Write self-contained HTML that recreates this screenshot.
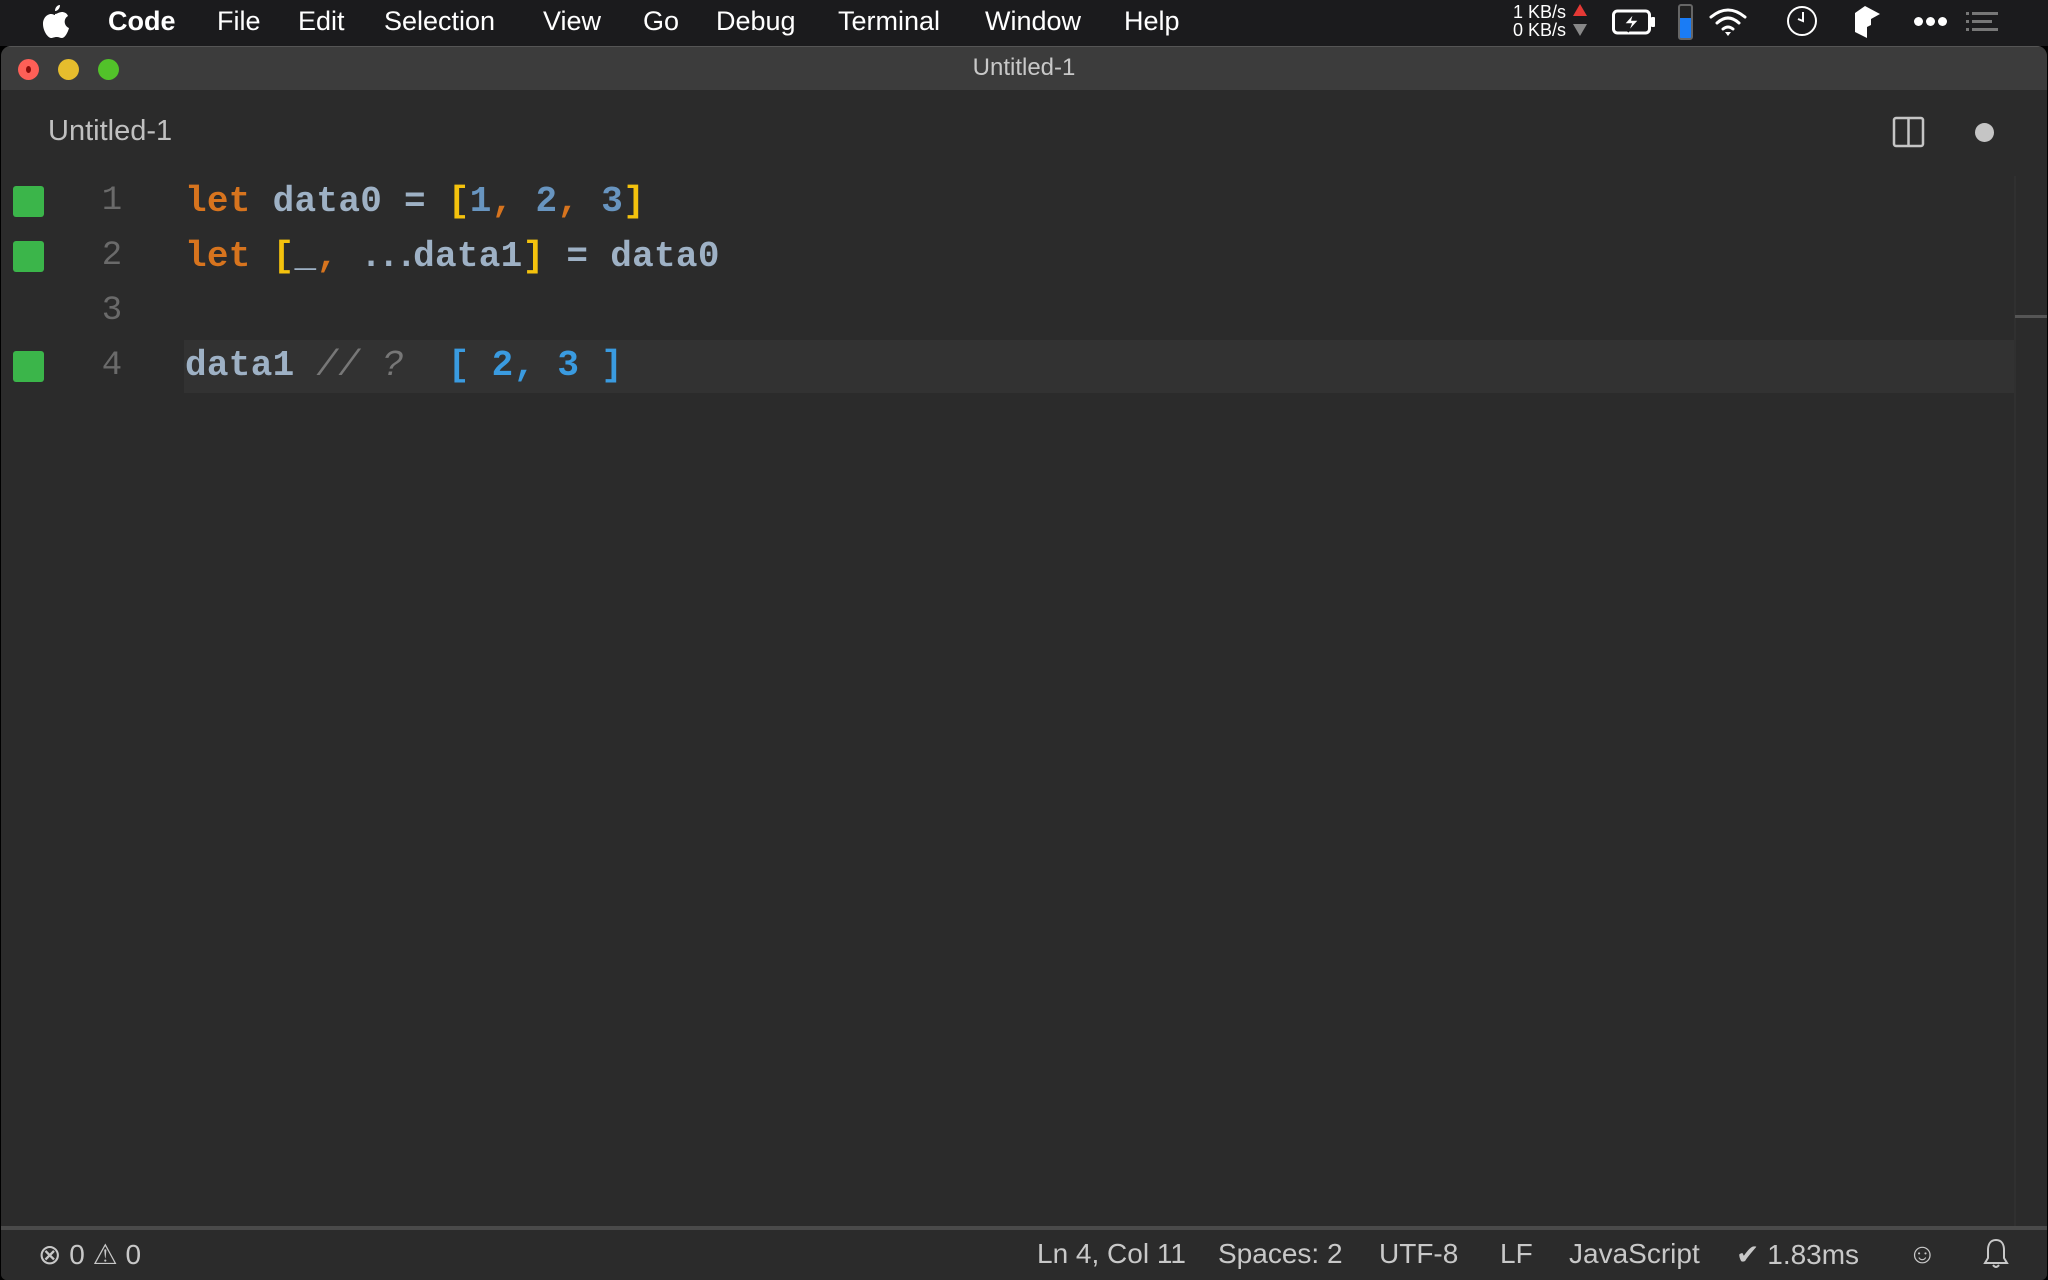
<!DOCTYPE html>
<html><head><meta charset="utf-8"><style>
*{margin:0;padding:0;box-sizing:border-box}
body{width:2048px;height:1280px;background:#000;overflow:hidden;font-family:"Liberation Sans",sans-serif;position:relative}
.abs{position:absolute}
#menubar{left:0;top:0;width:2048px;height:46px;background:#1b1b1d}
.mi{position:absolute;top:6px;font-size:27px;color:#fff;white-space:nowrap}
#win{left:1px;top:46px;width:2046px;height:1234px;background:#2b2b2b;border-radius:10px 10px 6px 6px;overflow:hidden}
#title{left:0;top:0;width:100%;height:44px;background:#3c3c3c;border-top:1px solid #555}
.light{position:absolute;top:12px;width:21px;height:21px;border-radius:50%}
.code{position:absolute;left:184px;font-family:"Liberation Mono",monospace;font-size:36px;font-weight:bold;white-space:pre;color:#9eb1c5;letter-spacing:0.3px}
.ln{position:absolute;left:96px;width:30px;text-align:center;font-family:"Liberation Mono",monospace;font-size:34px;color:#6a6a6a}
.sq{position:absolute;left:12px;width:31px;height:31px;background:#3bb54a;border-radius:3px}
.k{color:#d7741e}.b{color:#f4c20d}.n{color:#6895c0}.r{color:#3a9be0}.c{color:#777;font-style:italic;font-weight:normal}.p{color:#d7741e}
#status{left:0;top:1180px;width:100%;height:54px;background:#2b2b2b;border-top:4px solid #4a4a4a}
.st{position:absolute;top:8px;font-size:28px;color:#c8c8c8;white-space:nowrap}
</style></head><body>
<div id="menubar" class="abs">
<svg class="abs" style="left:41px;top:5px" width="28" height="34" viewBox="0 0 28 34"><path fill="#fff" d="M19 0c0 3-2 6-5 6 0-3 2-6 5-6zM14 9c2 0 4-2 7-2 2 0 5 1 6 4-5 3-4 10 1 12-1 4-4 10-7 10-2 0-3-1-5-1-3 0-4 1-6 1-3 0-8-7-8-14 0-7 5-10 8-10 2 0 3 1 4 1z"/></svg>
<div class="mi" style="left:108px;font-weight:bold">Code</div>
<div class="mi" style="left:217px">File</div>
<div class="mi" style="left:298px">Edit</div>
<div class="mi" style="left:384px">Selection</div>
<div class="mi" style="left:543px">View</div>
<div class="mi" style="left:643px">Go</div>
<div class="mi" style="left:716px">Debug</div>
<div class="mi" style="left:838px">Terminal</div>
<div class="mi" style="left:985px">Window</div>
<div class="mi" style="left:1124px">Help</div>
<div class="abs" style="left:1500px;top:3px;font-size:18px;line-height:18px;color:#fff;text-align:right;width:66px">1 KB/s<br>0 KB/s</div>
<div class="abs" style="left:1573px;top:4px;width:0;height:0;border-left:7px solid transparent;border-right:7px solid transparent;border-bottom:12px solid #e53935"></div>
<div class="abs" style="left:1573px;top:24px;width:0;height:0;border-left:7px solid transparent;border-right:7px solid transparent;border-top:12px solid #888"></div>
<svg class="abs" style="left:1612px;top:9px" width="44" height="26" viewBox="0 0 44 26"><rect x="1.5" y="2" width="36" height="22" rx="4" fill="none" stroke="#fff" stroke-width="3"/><rect x="39" y="8" width="4" height="10" rx="1" fill="#fff"/><path d="M22 4 L12 15 H19 L16 23 L27 11 H20 Z" fill="#fff" stroke="#1b1b1d" stroke-width="1.5"/></svg>
<div class="abs" style="left:1678px;top:4px;width:15px;height:36px;border:2px solid #666;border-radius:3px;background:linear-gradient(#222 0 38%,#1a7cf5 38%)"></div>
<svg class="abs" style="left:1709px;top:7px" width="38" height="30" viewBox="0 0 38 30"><g fill="none" stroke="#fff" stroke-width="3" stroke-linecap="round"><path d="M2 10 Q19 -4 36 10"/><path d="M8 16 Q19 6 30 16"/><path d="M14 22 Q19 18 24 22"/></g><path d="M16 25 L19 29 L22 25 Z" fill="#fff"/></svg>
<svg class="abs" style="left:1786px;top:4px" width="32" height="34" viewBox="0 0 32 34"><circle cx="16" cy="17" r="14" fill="none" stroke="#fff" stroke-width="2"/><path d="M17 8 V17 L12 15" fill="none" stroke="#fff" stroke-width="2"/></svg>
<svg class="abs" style="left:1853px;top:5px" width="28" height="34" viewBox="0 0 28 34"><path d="M12 1 L27 9 L18 14 L18 20 L14 22 L14 33 L2 27 L2 8 Z" fill="#fff"/></svg>
<div class="abs" style="left:1914px;top:17px;font-size:0">
<span style="display:inline-block;width:9px;height:9px;border-radius:50%;background:#fff;margin-right:3px"></span><span style="display:inline-block;width:9px;height:9px;border-radius:50%;background:#fff;margin-right:3px"></span><span style="display:inline-block;width:9px;height:9px;border-radius:50%;background:#fff"></span></div>
<svg class="abs" style="left:1966px;top:11px" width="32" height="22" viewBox="0 0 32 22"><g fill="#777"><rect x="0" y="1" width="3" height="3"/><rect x="6" y="1" width="26" height="3"/><rect x="0" y="9" width="3" height="3"/><rect x="6" y="9" width="20" height="3"/><rect x="0" y="17" width="3" height="3"/><rect x="6" y="17" width="26" height="3"/></g></svg>
</div>
<div id="win" class="abs">
<div id="title" class="abs">
<div class="light" style="left:17px;background:#fe5f57"><div style="position:absolute;left:8px;top:7px;width:5px;height:7px;border-radius:50%;background:#8b0c0a"></div></div>
<div class="light" style="left:57px;background:#e6bd2d"></div>
<div class="light" style="left:97px;background:#52c22a"></div>
<div class="abs" style="left:0;width:100%;top:7px;text-align:center;font-size:24px;color:#c8c8c8">Untitled-1</div>
</div>
<div class="abs" style="left:47px;top:69px;font-size:29px;color:#c0c0c0">Untitled-1</div>
<svg class="abs" style="left:1891px;top:69px" width="34" height="34" viewBox="0 0 34 34"><rect x="2" y="3" width="29" height="28" rx="2" fill="none" stroke="#c5c5c5" stroke-width="2.5"/><line x1="16.5" y1="3" x2="16.5" y2="31" stroke="#c5c5c5" stroke-width="2.5"/></svg>
<div class="abs" style="left:1974px;top:77px;width:19px;height:19px;border-radius:50%;background:#c5c5c5"></div>
<div class="abs" style="left:183px;top:294px;width:1830px;height:53px;background:#323232"></div>
<div class="abs" style="left:2013px;top:130px;width:2px;height:1050px;background:#303030"></div>
<div class="abs" style="left:2014px;top:269px;width:32px;height:3px;background:#555"></div>
<div class="sq" style="top:140px"></div>
<div class="sq" style="top:195px"></div>
<div class="sq" style="top:305px"></div>
<div class="ln" style="top:136px">1</div>
<div class="ln" style="top:191px">2</div>
<div class="ln" style="top:246px">3</div>
<div class="ln" style="top:301px">4</div>
<div class="code" style="top:135px"><span class="k">let</span> data0 = <span class="b">[</span><span class="n">1</span><span class="p">,</span> <span class="n">2</span><span class="p">,</span> <span class="n">3</span><span class="b">]</span></div>
<div class="code" style="top:190px"><span class="k">let</span> <span class="b">[</span>_<span class="p">,</span> <span style="letter-spacing:-4px">...</span>data1<span class="b">]</span> = data0</div>
<div class="code" style="top:299px">data1 <span class="c">// ?</span>  <span class="r">[ 2, 3 ]</span></div>
<div id="status" class="abs">
<div class="st" style="left:37px">⊗ 0 ⚠ 0</div>
<div class="st" style="left:1036px">Ln 4, Col 11</div>
<div class="st" style="left:1217px">Spaces: 2</div>
<div class="st" style="left:1378px">UTF-8</div>
<div class="st" style="left:1499px">LF</div>
<div class="st" style="left:1568px">JavaScript</div>
<div class="st" style="left:1735px">✔ 1.83ms</div>
<div class="st" style="left:1907px">☺</div>
<svg class="abs" style="left:1982px;top:8px" width="26" height="32" viewBox="0 0 26 32"><path d="M13 2 C7 2 5 7 5 12 V20 L2 25 H24 L21 20 V12 C21 7 19 2 13 2 Z M10 27 Q13 31 16 27" fill="none" stroke="#c8c8c8" stroke-width="2"/></svg>
</div>
</div>
</body></html>
